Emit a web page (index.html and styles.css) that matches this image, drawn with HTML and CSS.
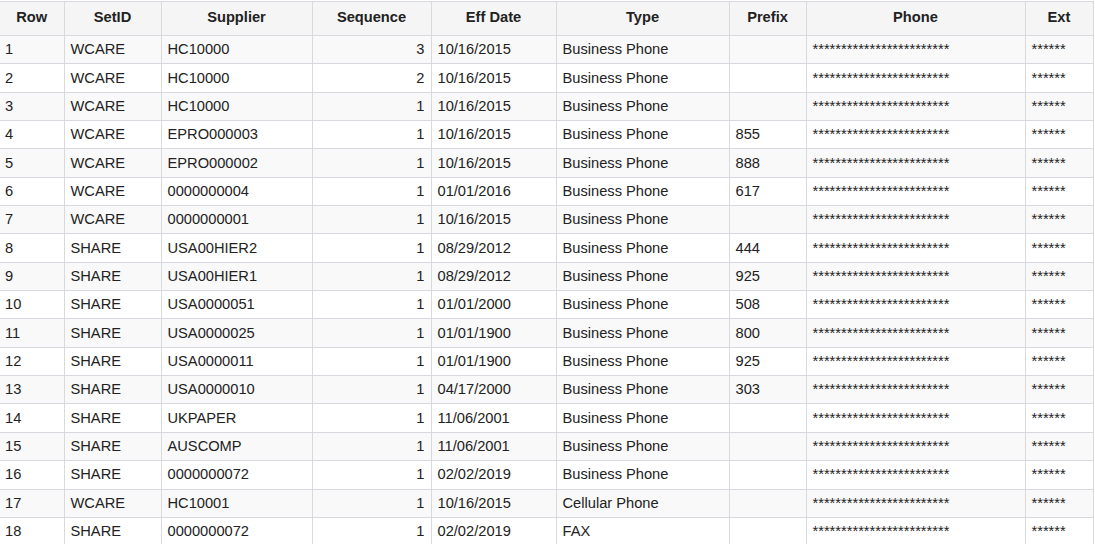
FILE: index.html
```html
<!DOCTYPE html>
<html>
<head>
<meta charset="utf-8">
<link rel="stylesheet" href="styles.css">
</head>
<body>
<div class="wrap">
<table class="grid">
<colgroup>
<col class="c-row"><col class="c-setid"><col class="c-supplier"><col class="c-seq"><col class="c-date"><col class="c-type"><col class="c-prefix"><col class="c-phone"><col class="c-ext">
</colgroup>
<thead>
<tr><th>Row</th><th>SetID</th><th>Supplier</th><th>Sequence</th><th>Eff Date</th><th>Type</th><th>Prefix</th><th>Phone</th><th>Ext</th></tr>
</thead>
<tbody>
<tr><td>1</td><td>WCARE</td><td>HC10000</td><td class="num">3</td><td>10/16/2015</td><td>Business Phone</td><td></td><td class="mask">************************</td><td class="mask">******</td></tr>
<tr><td>2</td><td>WCARE</td><td>HC10000</td><td class="num">2</td><td>10/16/2015</td><td>Business Phone</td><td></td><td class="mask">************************</td><td class="mask">******</td></tr>
<tr><td>3</td><td>WCARE</td><td>HC10000</td><td class="num">1</td><td>10/16/2015</td><td>Business Phone</td><td></td><td class="mask">************************</td><td class="mask">******</td></tr>
<tr><td>4</td><td>WCARE</td><td>EPRO000003</td><td class="num">1</td><td>10/16/2015</td><td>Business Phone</td><td>855</td><td class="mask">************************</td><td class="mask">******</td></tr>
<tr><td>5</td><td>WCARE</td><td>EPRO000002</td><td class="num">1</td><td>10/16/2015</td><td>Business Phone</td><td>888</td><td class="mask">************************</td><td class="mask">******</td></tr>
<tr><td>6</td><td>WCARE</td><td>0000000004</td><td class="num">1</td><td>01/01/2016</td><td>Business Phone</td><td>617</td><td class="mask">************************</td><td class="mask">******</td></tr>
<tr><td>7</td><td>WCARE</td><td>0000000001</td><td class="num">1</td><td>10/16/2015</td><td>Business Phone</td><td></td><td class="mask">************************</td><td class="mask">******</td></tr>
<tr><td>8</td><td>SHARE</td><td>USA00HIER2</td><td class="num">1</td><td>08/29/2012</td><td>Business Phone</td><td>444</td><td class="mask">************************</td><td class="mask">******</td></tr>
<tr><td>9</td><td>SHARE</td><td>USA00HIER1</td><td class="num">1</td><td>08/29/2012</td><td>Business Phone</td><td>925</td><td class="mask">************************</td><td class="mask">******</td></tr>
<tr><td>10</td><td>SHARE</td><td>USA0000051</td><td class="num">1</td><td>01/01/2000</td><td>Business Phone</td><td>508</td><td class="mask">************************</td><td class="mask">******</td></tr>
<tr><td>11</td><td>SHARE</td><td>USA0000025</td><td class="num">1</td><td>01/01/1900</td><td>Business Phone</td><td>800</td><td class="mask">************************</td><td class="mask">******</td></tr>
<tr><td>12</td><td>SHARE</td><td>USA0000011</td><td class="num">1</td><td>01/01/1900</td><td>Business Phone</td><td>925</td><td class="mask">************************</td><td class="mask">******</td></tr>
<tr><td>13</td><td>SHARE</td><td>USA0000010</td><td class="num">1</td><td>04/17/2000</td><td>Business Phone</td><td>303</td><td class="mask">************************</td><td class="mask">******</td></tr>
<tr><td>14</td><td>SHARE</td><td>UKPAPER</td><td class="num">1</td><td>11/06/2001</td><td>Business Phone</td><td></td><td class="mask">************************</td><td class="mask">******</td></tr>
<tr><td>15</td><td>SHARE</td><td>AUSCOMP</td><td class="num">1</td><td>11/06/2001</td><td>Business Phone</td><td></td><td class="mask">************************</td><td class="mask">******</td></tr>
<tr><td>16</td><td>SHARE</td><td>0000000072</td><td class="num">1</td><td>02/02/2019</td><td>Business Phone</td><td></td><td class="mask">************************</td><td class="mask">******</td></tr>
<tr><td>17</td><td>WCARE</td><td>HC10001</td><td class="num">1</td><td>10/16/2015</td><td>Cellular Phone</td><td></td><td class="mask">************************</td><td class="mask">******</td></tr>
<tr><td>18</td><td>SHARE</td><td>0000000072</td><td class="num">1</td><td>02/02/2019</td><td>FAX</td><td></td><td class="mask">************************</td><td class="mask">******</td></tr>
</tbody>
</table>
</div>
</body>
</html>
```

FILE: styles.css
```css
html, body {
  margin: 0;
  padding: 0;
  background: #ffffff;
}
.wrap {
  padding-top: 1px;
}
.grid {
  border-collapse: collapse;
  table-layout: fixed;
  width: 1093px;
  font-family: "Liberation Sans", Arial, sans-serif;
  font-size: 14.67px;
  color: #222222;
}
.c-row { width: 64px; }
.c-setid { width: 97px; }
.c-supplier { width: 151px; }
.c-seq { width: 119px; }
.c-date { width: 125px; }
.c-type { width: 173px; }
.c-prefix { width: 77px; }
.c-phone { width: 219px; }
.c-ext { width: 68px; }
.grid th, .grid td {
  border: 1px solid #d6d9de;
  padding: 0 6px 1px 6px;
  white-space: nowrap;
  overflow: hidden;
}
.grid th:first-child, .grid td:first-child {
  border-left: none;
}
.grid thead tr {
  height: 34px;
}
.grid th {
  background: #f5f5f5;
  font-weight: bold;
  text-align: center;
  color: #222222;
  padding-bottom: 4px;
}
.grid tbody tr {
  height: 28.35px;
}
.grid td {
  text-align: left;
}
.grid td:first-child {
  padding-left: 5px;
}
.grid tbody tr:nth-child(odd) td {
  background: #f9f9f9;
}
.grid td.num {
  text-align: right;
}
.grid td.mask {
  vertical-align: middle;
}
```
